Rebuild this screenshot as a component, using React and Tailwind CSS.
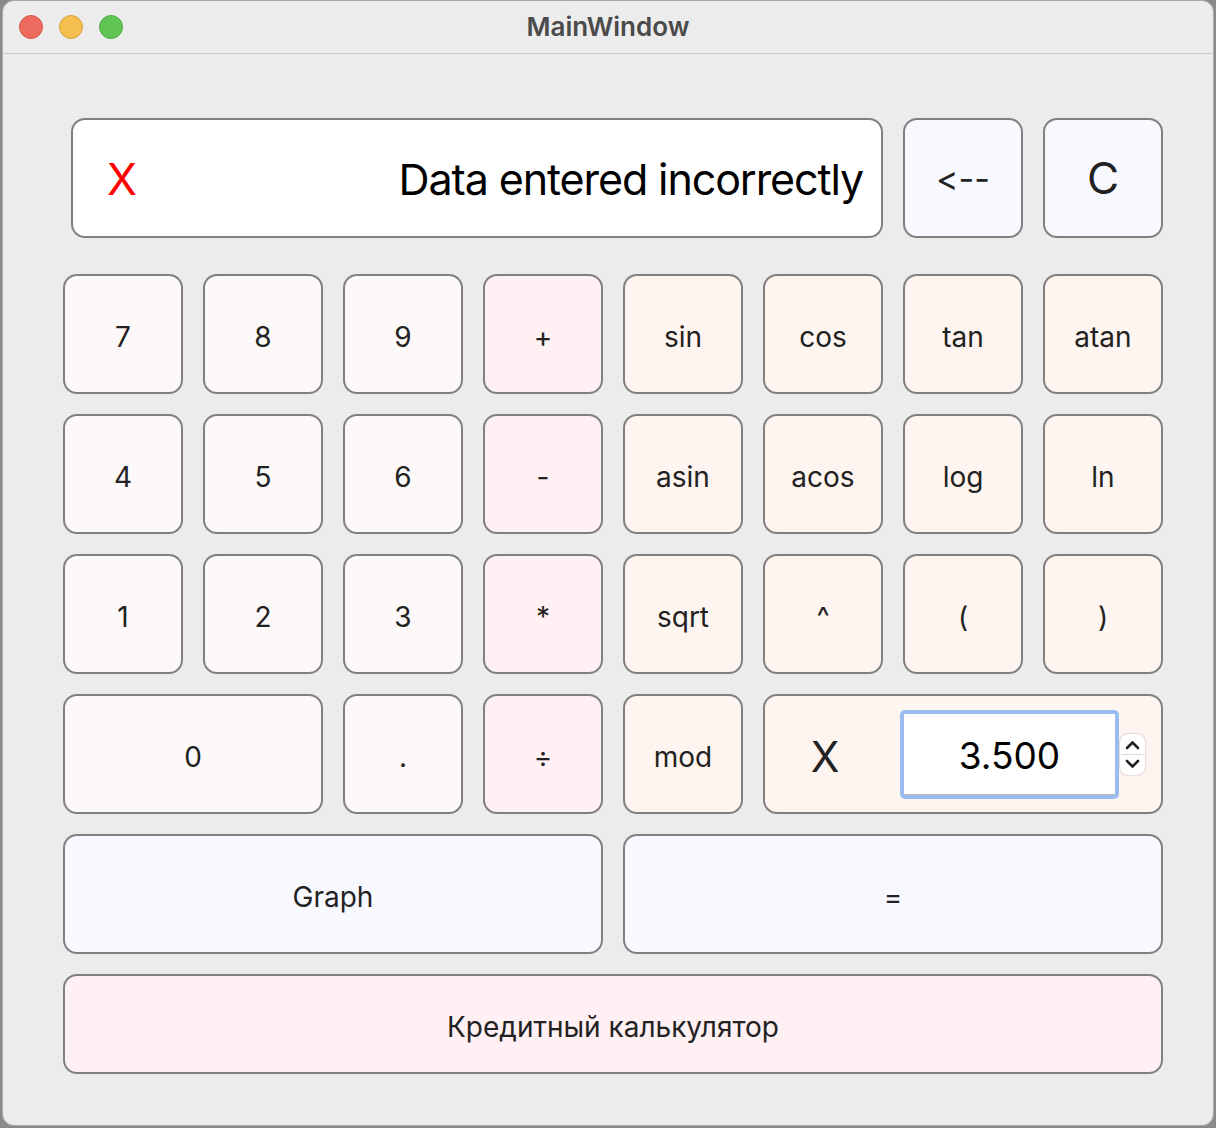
import React from 'react';

const font = { fontFamily: 'Inter, "Noto Sans", sans-serif' };

const tones = {
  digit: 'bg-[#fdf9f8]',
  op: 'bg-[#fff0f4]',
  fn: 'bg-[#fff5f0]',
  blue: 'bg-[#f8f9fe]',
};

function Key({ label, tone = 'digit', className = '' }) {
  return (
    <button
      className={`h-[120px] rounded-[14px] border-2 border-[#808080] text-[28px] text-[#222] flex items-center justify-center pt-[6px] ${tones[tone]} ${className}`}
    >
      {label}
    </button>
  );
}

const rows = [
  [['7'], ['8'], ['9'], ['+', 'op'], ['sin', 'fn'], ['cos', 'fn'], ['tan', 'fn'], ['atan', 'fn']],
  [['4'], ['5'], ['6'], ['-', 'op'], ['asin', 'fn'], ['acos', 'fn'], ['log', 'fn'], ['ln', 'fn']],
  [['1'], ['2'], ['3'], ['*', 'op'], ['sqrt', 'fn'], ['^', 'fn'], ['(', 'fn'], [')', 'fn']],
];

export default function App() {
  return (
    <div className="w-[1216px] h-[1128px] bg-[#8a8a8a] overflow-hidden [font-feature-settings:'calt'_0,'liga'_0]" style={font}>
      <div className="ml-[2px] w-[1212px] h-[1126px] rounded-[12px] border border-[#a8a8a8] bg-[#ececec] overflow-hidden">
        {/* title bar */}
        <div className="h-[53px] border-b border-[#cbcbcb] grid grid-cols-[1fr_auto_1fr] items-center">
          <div className="flex items-center gap-4 pl-[16px]">
            <span className="w-[24px] h-[24px] rounded-full bg-[#ed6a5e] border border-[#d65548]" />
            <span className="w-[24px] h-[24px] rounded-full bg-[#f5bf4f] border border-[#d9a23f]" />
            <span className="w-[24px] h-[24px] rounded-full bg-[#61c554] border border-[#4fac43]" />
          </div>
          <div className="text-[26px] font-semibold text-[#4a4a4a] -mt-[2px]">MainWindow</div>
          <div />
        </div>

        {/* body */}
        <div className="pt-[64px] pl-[60px]">
          <div className="grid grid-cols-[repeat(8,120px)] gap-x-5">
            <div className="col-span-6 ml-2 h-[120px] rounded-[14px] border-2 border-[#808080] bg-white flex items-center justify-between pl-[34px] pr-[18px] pt-[2px]">
              <span className="text-[44px] text-[#ff0000]">X</span>
              <span className="text-[43px] text-black tracking-[-1.1px]">Data entered incorrectly</span>
            </div>
            <Key label="<--" tone="blue" className="!text-[34px] !pt-0" />
            <Key label="C" tone="blue" className="!text-[44px] !pt-0" />
          </div>

          <div className="mt-[36px] grid grid-cols-[repeat(8,120px)] gap-5">
            {rows.flat().map(([label, tone], i) => (
              <Key key={i} label={label} tone={tone} />
            ))}
            <Key label="0" className="col-span-2" />
            <Key label="." />
            <Key label="÷" tone="op" />
            <Key label="mod" tone="fn" />
            <div className="col-span-3 h-[120px] rounded-[14px] border-2 border-[#808080] bg-[#fff5f0] flex items-center">
              <span className="w-[120px] text-center text-[42px] text-[#222] pt-1">X</span>
              <div className="ml-[15px] w-[219px] h-[89px] rounded-[5px] bg-[#9bbcf0] p-[4px]">
                <div className="w-full h-full bg-white border-b border-[#b8b8b8] flex items-center justify-center text-[37px] text-black pt-1">
                  3.500
                </div>
              </div>
              <div className="ml-[1px] w-[25px] h-[41px] rounded-[8px] bg-white shadow-[0_0_2px_rgba(0,0,0,0.35)] flex items-center justify-center">
                <svg width="25" height="41" viewBox="0 0 25 41" fill="none" stroke="#222" strokeWidth="2.6" strokeLinecap="round" strokeLinejoin="round">
                  <path d="M7 14 L12.5 8.5 L18 14" />
                  <line x1="1" y1="20.5" x2="24" y2="20.5" stroke="#dcdcdc" strokeWidth="1" />
                  <path d="M7 27 L12.5 32.5 L18 27" />
                </svg>
              </div>
            </div>
            <Key label="Graph" tone="blue" className="col-span-4" />
            <Key label="=" tone="blue" className="col-span-4" />
            <Key label="Кредитный калькулятор" tone="op" className="col-span-8 !h-[100px]" />
          </div>
        </div>
      </div>
    </div>
  );
}
